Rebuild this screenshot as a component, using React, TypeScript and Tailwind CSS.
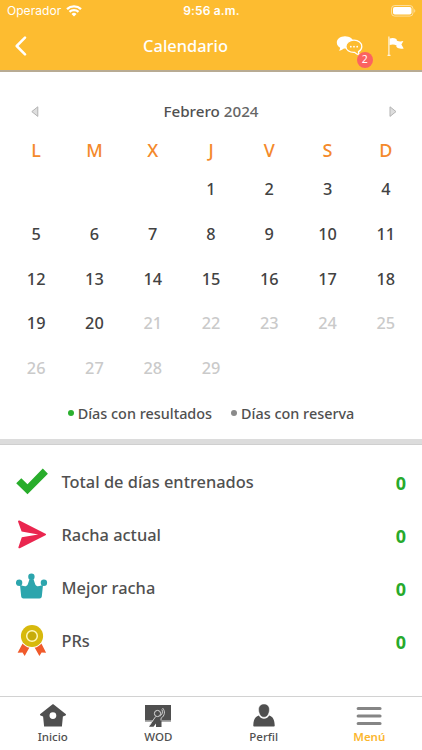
import React from 'react';

interface Stat {
  label: string;
  value: number;
  icon: React.ReactNode;
}

const WEEKDAYS = ['L', 'M', 'X', 'J', 'V', 'S', 'D'];
const FIRST_WEEKDAY = 3;
const DAYS_IN_MONTH = 29;
const TODAY = 20;

const StatusBar = () => (
  <div className="grid h-[22px] grid-cols-3 items-center pl-[7px] pr-[6px] font-['Inter',sans-serif] text-[12px]">
    <div className="flex items-center gap-[5px]">
      <span className="text-[12px] tracking-[0.05px]">Operador</span>
      <svg width="16" height="12" viewBox="0 0 16 12" fill="none" stroke="currentColor" strokeWidth="2.3">
        <path d="M1 4.1a10.2 10.2 0 0 1 14 0" />
        <path d="M3.5 6.9a6.6 6.6 0 0 1 9 0" />
        <path d="M8 11.4 5.5 8.9a3.6 3.6 0 0 1 5 0z" fill="currentColor" stroke="none" />
      </svg>
    </div>
    <span className="text-center font-semibold tracking-[0.15px]">9:56 a.m.</span>
    <svg className="justify-self-end" width="26" height="12" viewBox="0 0 26 12" fill="none">
      <rect x="1.5" y="0.5" width="21.5" height="10.6" rx="3.2" stroke="white" strokeOpacity="0.5" />
      <rect x="3" y="2" width="18.5" height="7.6" rx="1.8" fill="white" />
      <path d="M24.3 4v3.7c1.3-.7 1.3-3 0-3.7z" fill="white" fillOpacity="0.6" />
    </svg>
  </div>
);

const Header = () => (
  <header className="h-[72px] border-b-2 border-[#b8ab93] bg-[#fdbc30] text-white">
    <StatusBar />
    <div className="grid h-[48px] grid-cols-[39px_1fr_90px] items-center">
      <svg className="ml-[15px]" width="12" height="20" viewBox="0 0 12 20" fill="none" stroke="currentColor" strokeWidth="2.5" strokeLinecap="round" strokeLinejoin="round">
        <path d="M10 1.6 1.7 10l8.3 8.4" />
      </svg>
      <h1 className="text-center text-[16.4px] font-medium">Calendario</h1>
      <div className="flex items-center">
        <div className="relative">
          <svg className="ml-[4px]" width="27" height="22" viewBox="0 0 27 22">
            <path d="M9 1.2c-4.6 0-8.2 2.8-8.2 6.3 0 2.3 1.3 4.1 3.3 5.2 0 1.2-.5 2.2-1.3 3.1 2-.2 3.8-1 5.1-2.2h1.2c4.8 0 8.4-2.7 8.4-6.1 0-3.5-3.7-6.3-8.5-6.3z" fill="white" />
            <path d="M18 5.2c-4.7 0-8.1 2.7-8.1 6.2s3.5 6 8 6h.7c1.4 1.6 3 2.3 4.9 2.5-.7-1-1.1-2-1-3.3 2-1.1 3.3-2.9 3.3-5.2 0-3.4-3.4-6.2-7.8-6.2z" fill="#fdbc30" stroke="white" strokeWidth="1.3" />
            <circle cx="14.8" cy="11.7" r="0.9" fill="white" />
            <circle cx="18" cy="11.7" r="0.9" fill="white" />
            <circle cx="21.2" cy="11.7" r="0.9" fill="white" />
          </svg>
          <span className="absolute left-[25px] top-[17px] flex h-[15.5px] w-[15.5px] items-center justify-center rounded-full bg-[#fb6360] text-[10.5px]">
            2
          </span>
        </div>
        <svg className="ml-[24px]" width="18" height="20" viewBox="0 0 18 20">
          <path d="M1.9 0.5v19" stroke="white" strokeWidth="1.2" strokeOpacity="0.85" />
          <path d="M0.5 19.3h3" stroke="white" strokeWidth="1" />
          <path d="M2.6 2.6c2.3-1 4.7-.7 6.8.5l.6 1.7c2 .8 4 .9 6.4.2l-2 3.6 2.3 3.8c-2.7.8-5.5.4-7.4-1.6l.3-1.3c-2-1.1-4.5-1.3-7-.4z" fill="white" />
        </svg>
      </div>
    </div>
  </header>
);

const Calendar = () => {
  const blanks = Array.from({ length: FIRST_WEEKDAY });
  const days = Array.from({ length: DAYS_IN_MONTH }, (_, i) => i + 1);

  return (
    <section className="h-[367px] px-[7px] pt-[23px] font-medium">
      <div className="flex h-8 items-center justify-between pl-[24px] pr-[18px]">
        <svg width="8" height="11" viewBox="0 0 8 11">
          <path d="M6.8.8v9.6L.8 5.6z" fill="#dedede" stroke="#b3b3b3" />
        </svg>
        <span className="-ml-[6px] text-[15.2px] text-[#505050]">
          Febrero <span className="text-[#666]">2024</span>
        </span>
        <svg width="8" height="11" viewBox="0 0 8 11">
          <path d="M1 .8v9.6l6-4.8z" fill="#dedede" stroke="#b3b3b3" />
        </svg>
      </div>

      <div className="-mt-px grid h-[48px] grid-cols-7 items-center text-center text-[18px] text-[#f4892b]">
        {WEEKDAYS.map((day) => (
          <span key={day}>{day}</span>
        ))}
      </div>

      <div className="-mt-[7px] grid auto-rows-[44.7px] grid-cols-7 items-center text-center text-[16.3px]">
        {blanks.map((_, i) => (
          <span key={`blank-${i}`} />
        ))}
        {days.map((day) => (
          <span key={day} className={day > TODAY ? 'text-[#cacaca]' : 'text-[#424242]'}>
            {day}
          </span>
        ))}
      </div>

      <div className="flex h-[46px] items-center justify-center gap-[19px] text-[14.4px] text-[#505050]">
        <span className="flex items-center gap-[4px]">
          <i className="h-[6px] w-[6px] rounded-full bg-[#2bb02f]" />
          Días con resultados
        </span>
        <span className="flex items-center gap-[4px]">
          <i className="h-[6px] w-[6px] rounded-full bg-[#8a8a8a]" />
          Días con reserva
        </span>
      </div>
    </section>
  );
};

const STATS: Stat[] = [
  {
    label: 'Total de días entrenados',
    value: 0,
    icon: (
      <svg width="34" height="34" viewBox="0 0 34 34">
        <path d="m5.3 13.3 6.2 5.9L26.8 3.5l5.1 5.3L11.5 29.2.2 18.3z" fill="#28ad2b" />
      </svg>
    ),
  },
  {
    label: 'Racha actual',
    value: 0,
    icon: (
      <svg width="34" height="34" viewBox="0 0 34 34">
        <path d="M2 3.4c0-.8.8-1.1 1.5-.8l26 13.2c.8.4.8 1 0 1.4L3.8 30.2c-.8.3-1.5-.1-1.4-.9l3.4-10 16.4-2.7-16.6-3z" fill="#ea264f" />
      </svg>
    ),
  },
  {
    label: 'Mejor racha',
    value: 0,
    icon: (
      <svg width="34" height="34" viewBox="0 0 34 34" fill="#2ca5ad">
        <circle cx="3.1" cy="11.8" r="3.2" />
        <circle cx="15.4" cy="5.7" r="3.2" />
        <circle cx="27.9" cy="11.8" r="3.2" />
        <path d="m4 14 3.6 1.1c1.8.4 3.4-.1 4.2-1.9l1.7-5h4l1.7 5c.8 1.8 2.4 2.3 4.2 1.9L27 14l-1.2 11.5c-.2 1.3-1.1 2-2.3 2h-16c-1.2 0-2.1-.7-2.3-2z" />
      </svg>
    ),
  },
  {
    label: 'PRs',
    value: 0,
    icon: (
      <svg width="34" height="34" viewBox="0 0 34 34">
        <path d="M6.6 19.5 1.6 28.7l4.9-.3L8.7 32l5.4-9.7zM25.4 19.5l4.7 9.2-4.5-.3-2.2 3.6-5.5-9.7z" fill="#f05a2b" />
        <circle cx="16" cy="12" r="12" fill="white" />
        <circle cx="16" cy="12" r="11.1" fill="#d7b90d" />
        <circle cx="16" cy="12" r="5.3" fill="#c7ac0b" stroke="#fff8bd" strokeWidth="1.5" />
      </svg>
    ),
  },
];

const StatList = () => (
  <section className="flex-1 pt-[10px]">
    {STATS.map((stat) => (
      <div key={stat.label} className="flex h-[53px] items-center pl-4 pr-4">
        {stat.icon}
        <span className="ml-[11.5px] flex-1 pt-[2px] text-[16.4px] font-medium text-[#505050]">{stat.label}</span>
        <span className="pt-[3px] text-[18px] font-bold text-[#27aa2c]">{stat.value}</span>
      </div>
    ))}
  </section>
);

const TabBar = () => (
  <nav className="grid h-[54px] grid-cols-4 border-t border-[#d2d2d2] text-[11.5px] font-medium text-[#505050]">
    <div className="flex flex-col items-center pt-[6px]">
      <svg width="28" height="26" viewBox="0 0 28 26">
        <path
          d="M13.3 1.5c.5-.4.9-.4 1.4 0l12 9.6c.6.6.4 1.2-.3 1.5l-2.5.8-1 10.2H5.1l-1-10.2-2.5-.8c-.7-.3-.9-.9-.3-1.5zm.6 7.7a3.4 3.4 0 1 0 0 6.8 3.4 3.4 0 0 0 0-6.8z"
          fill="#4f4f4f"
          fillRule="evenodd"
        />
      </svg>
      <span className="-mt-px leading-[18px]">Inicio</span>
    </div>
    <div className="flex flex-col items-center pt-[6px]">
      <svg width="28" height="26" viewBox="0 0 28 26">
        <path d="M1 2h26v15.6H1z" fill="#4f4f4f" />
        <path d="M1 18.3h26" stroke="#9a9a9a" strokeWidth="1" />
        <path d="M12 13 5 23.8h4.5l2.5-3.3v3.4h5.5v-6.4l2-4.5z" fill="#4f4f4f" />
        <path d="m11.7 13.5-6.5 9.3" fill="none" stroke="#ddd" strokeWidth="0.9" />
        <circle cx="13.5" cy="10.5" r="3.1" fill="#4f4f4f" stroke="#ddd" strokeWidth="1" />
        <path d="M17 17.5v-2.2c4-2.6 4.5-7.2 1.5-10.3M16.2 13c2.2-1.6 2.8-4 1.7-6.6" fill="none" stroke="#ddd" strokeWidth="0.9" />
      </svg>
      <span className="-mt-px leading-[18px]">WOD</span>
    </div>
    <div className="flex flex-col items-center pt-[6px]">
      <svg width="28" height="26" viewBox="0 0 28 26" fill="#4f4f4f">
        <path d="M3.3 22.2c.2-5.3 1.8-8.7 5.6-9.7 2.3 4.4 7.9 4.4 10.2 0 3.8 1 5.4 4.4 5.6 9.7.1.9-.3 1.4-1.2 1.4h-19c-.9 0-1.3-.5-1.2-1.4z" />
        <path d="M14 1c3.5 0 5.6 2.5 5.4 6-.2 4-2.2 7.3-5.4 7.3S8.8 11 8.6 7C8.4 3.5 10.5 1 14 1z" stroke="white" strokeWidth="0.5" />
      </svg>
      <span className="-mt-px leading-[18px]">Perfil</span>
    </div>
    <div className="flex flex-col items-center pt-[6px] text-[#fbb62f]">
      <svg width="28" height="26" viewBox="0 0 28 26" stroke="#858585" strokeWidth="3.2" strokeLinecap="round">
        <path d="M3.2 5.5h21.8M3.2 13h21.8M3.2 20.5h21.8" />
      </svg>
      <span className="-mt-px font-semibold leading-[18px]">Menú</span>
    </div>
  </nav>
);

const App: React.FC = () => {
  return (
    <div className="flex h-[750px] w-[422px] flex-col overflow-hidden bg-white font-['Noto_Sans',sans-serif]">
      <Header />
      <Calendar />
      <div className="h-[6px] border-b border-[#cfcfcf] bg-[#dcdcdc]" />
      <StatList />
      <TabBar />
    </div>
  );
};

export default App;
